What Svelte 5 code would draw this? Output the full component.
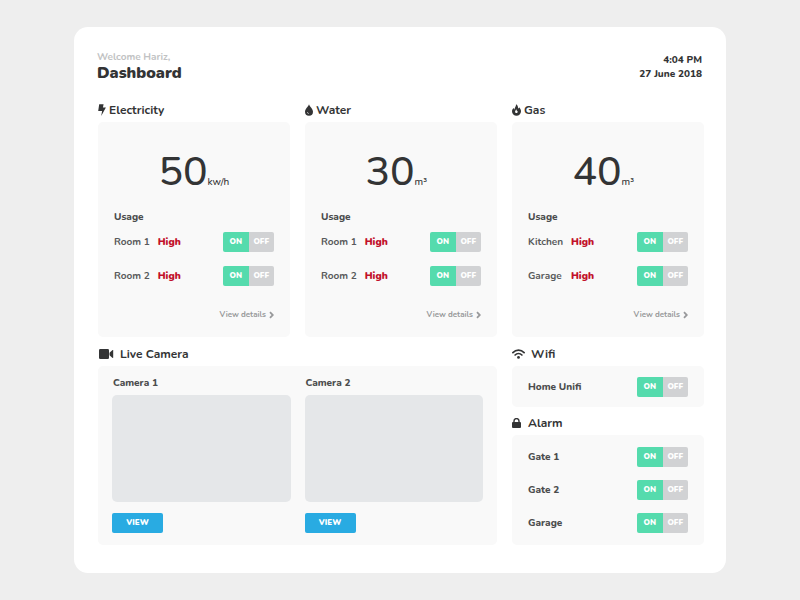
<script>
  const meters = $state([
    {
      name: 'Electricity', icon: 'bolt', value: 50, unit: 'kw/h',
      rooms: [{ name: 'Room 1', level: 'High', on: true }, { name: 'Room 2', level: 'High', on: true }]
    },
    {
      name: 'Water', icon: 'drop', value: 30, unit: 'm³',
      rooms: [{ name: 'Room 1', level: 'High', on: true }, { name: 'Room 2', level: 'High', on: true }]
    },
    {
      name: 'Gas', icon: 'flame', value: 40, unit: 'm³',
      rooms: [{ name: 'Kitchen', level: 'High', on: true }, { name: 'Garage', level: 'High', on: true }]
    }
  ]);
  const wifi = $state([{ name: 'Home Unifi', on: true }]);
  const alarms = $state([
    { name: 'Gate 1', on: true },
    { name: 'Gate 2', on: true },
    { name: 'Garage', on: true }
  ]);
  const cameras = ['Camera 1', 'Camera 2'];
</script>

{#snippet icon(name)}
  {#if name === 'bolt'}
    <svg width="8" height="12" viewBox="0 0 8 12" aria-hidden="true"><path d="M1.200 0.300h4.400L4.900 3.400h3L3.200 11.900l.9-4.900H0.200z" /></svg>
  {:else if name === 'drop'}
    <svg width="8" height="12" viewBox="0 0 8 12" aria-hidden="true"><path fill-rule="evenodd" d="M4 .2C4.700 2.700 8 4.800 8 7.700a4 4 0 0 1-8 0C0 4.800 3.300 2.700 4 .2zM2.200 8c0 1 .7 1.700 1.700 1.700v-.5c-.7 0-1.200-.5-1.200-1.200z" /></svg>
  {:else if name === 'flame'}
    <svg width="9" height="12" viewBox="0 0 9 12" aria-hidden="true"><path fill-rule="evenodd" d="M4 .2C6.400 1.500 5.700 3.500 6.600 4.500c.4-.3.500-.8.500-1.300C8.400 4.500 9 5.900 9 7.300a4.500 4.500 0 0 1-9 0C0 5.500.9 4.700 1.700 3.900c.1.800.3 1.300.8 1.600C2.400 3.300 4.300 2.600 4 .2zM4 5.300c.1 1.100-.9 1.500-.9 2.500 0 .8.600 1.300 1.300 1.300s1.300-.5 1.300-1.300c0-.5-.2-.8-.5-1.100 0 .3-.1.500-.3.600C4.900 6.500 4.600 5.700 4 5.300z" /></svg>
  {:else if name === 'camera'}
    <svg width="16" height="10" viewBox="-1 0 16 10" aria-hidden="true"><rect width="10" height="10" rx="1.300" /><path d="M10.500 3.700 13.300 1.200c.4-.3.900-.1.900.4v6.800c0 .5-.5.7-.9.4L10.500 6.300z" /></svg>
  {:else if name === 'wifi'}
    <svg width="13" height="10" viewBox="0 0 13 10" aria-hidden="true"><g fill="none" stroke="currentColor" stroke-width="1.700" stroke-linecap="round"><path d="M.9 3.600C4.100.4 8.900.4 12.100 3.600" /><path d="M3.100 6c1.900-1.800 4.900-1.800 6.800 0" /></g><circle cx="6.500" cy="8.400" r="1.400" /></svg>
  {:else}
    <svg width="10" height="10" viewBox="0 0 10 10" aria-hidden="true"><rect y="4" width="9" height="6" rx="1" /><path d="M2 4.500V2.900a2.500 2.300 0 0 1 5 0v1.600" fill="none" stroke="currentColor" stroke-width="1.400" /></svg>
  {/if}
{/snippet}

{#snippet toggle(item)}
  <div class="toggle" role="group" aria-label={item.name}>
    <button type="button" class:active={item.on} aria-pressed={item.on} onclick={() => (item.on = true)}>ON</button>
    <button type="button" class:active={!item.on} aria-pressed={!item.on} onclick={() => (item.on = false)}>OFF</button>
  </div>
{/snippet}

<div class="page">
  <main class="panel">
    <header>
      <div>
        <p class="welcome">Welcome Hariz,</p>
        <h1>Dashboard</h1>
      </div>
      <div class="clock">
        <time>4:04 PM</time>
        <time datetime="2018-06-27">27 June 2018</time>
      </div>
    </header>

    <div class="grid">
      {#each meters as meter}
        <section>
          <h2>{@render icon(meter.icon)}{meter.name}</h2>
          <div class="card meter">
            <p class="reading"><span class="value">{meter.value}</span><span class="unit">{meter.unit}</span></p>
            <h3>Usage</h3>
            <ul class="rooms">
              {#each meter.rooms as room}
                <li>
                  <span class="room">{room.name}</span>
                  <span class="level">{room.level}</span>
                  {@render toggle(room)}
                </li>
              {/each}
            </ul>
            <a class="details" href="#details">View details
              <svg width="5" height="8" viewBox="0 0 5 8" aria-hidden="true"><path d="M1 1.200 3.800 4 1 6.800" fill="none" stroke="currentColor" stroke-width="1.800" /></svg>
            </a>
          </div>
        </section>
      {/each}

      <section class="live">
        <h2 class="wide">{@render icon('camera')}Live Camera</h2>
        <div class="card cameras">
          {#each cameras as camera}
            <div class="camera">
              <h3>{camera}</h3>
              <div class="feed"></div>
              <button type="button" class="view" aria-label="View {camera}">VIEW</button>
            </div>
          {/each}
        </div>
      </section>

      <div class="side">
        <section>
          <h2 class="wide">{@render icon('wifi')}Wifi</h2>
          <ul class="card devices compact">
            {#each wifi as item}
              <li><span>{item.name}</span>{@render toggle(item)}</li>
            {/each}
          </ul>
        </section>
        <section>
          <h2 class="wide">{@render icon('lock')}Alarm</h2>
          <ul class="card devices">
            {#each alarms as item}
              <li><span>{item.name}</span>{@render toggle(item)}</li>
            {/each}
          </ul>
        </section>
      </div>
    </div>
  </main>
</div>

<style>
  :global(body) {
    margin: 0;
    background: #eeeeee;
  }

  .page {
    box-sizing: border-box;
    min-height: 100vh;
    display: flex;
    align-items: center;
    padding: 24px 74px;
    font-family: Nunito, Lato, 'Open Sans', sans-serif;
    font-size: 10px;
    line-height: 14px;
    color: #333435;
  }

  .panel {
    flex: 1;
    padding: 24px 22px 28px 23px;
    border-radius: 14px;
    background: #fff;
  }

  h1, h2, h3, p, ul {
    margin: 0;
    padding: 0;
  }

  ul {
    list-style: none;
  }

  svg {
    flex: none;
    fill: currentColor;
  }

  header {
    display: flex;
    justify-content: space-between;
    height: 47px;
  }

  .welcome {
    line-height: 12px;
    font-weight: 700;
    color: #c1c2c3;
  }

  h1 {
    font-size: 16px;
    line-height: 20px;
    font-weight: 900;
  }

  .clock {
    display: flex;
    flex-direction: column;
    padding: 2px 2px 0 0;
    text-align: right;
    font-weight: 800;
  }

  .grid {
    display: grid;
    grid-template-columns: repeat(3, 1fr);
    gap: 1px 15px;
    padding-left: 1px;
  }

  h2 {
    display: flex;
    align-items: center;
    gap: 3px;
    height: 24px;
    font-size: 12px;
    font-weight: 700;
  }

  h2.wide {
    box-sizing: border-box;
    gap: 6px;
    height: 28px;
    padding-top: 4px;
  }

  h3 {
    font-size: 10px;
    font-weight: 800;
    color: #4b4c4d;
  }

  .card {
    border-radius: 5px;
    background: #f9f9f9;
  }

  .meter {
    display: flex;
    flex-direction: column;
    padding: 26px 16px 15px;
  }

  .reading {
    display: flex;
    align-items: baseline;
    justify-content: center;
    line-height: 48px;
    margin-bottom: 4px;
  }

  .value {
    font-size: 41px;
    font-weight: 500;
  }

  .unit {
    min-width: 22px;
    font-weight: 500;
  }

  .rooms {
    display: grid;
    gap: 14px;
    margin: 8px 0 22px;
  }

  li {
    display: flex;
    align-items: center;
  }

  .room {
    min-width: 35px;
    margin-right: 8px;
    font-weight: 700;
    color: #58595b;
  }

  .level {
    font-weight: 900;
    color: #c2112b;
  }

  .toggle {
    display: flex;
    width: 51px;
    height: 20px;
    margin-left: auto;
    border-radius: 2px;
    overflow: hidden;
  }

  button {
    padding: 0;
    border: 0;
    font: inherit;
    color: #fff;
    cursor: pointer;
  }

  .toggle button {
    flex: 1;
    background: #d1d2d4;
    font-size: 8px;
    font-weight: 900;
  }

  .toggle button.active {
    background: #55dbad;
  }

  .details {
    display: flex;
    align-items: center;
    align-self: flex-end;
    gap: 3px;
    font-size: 8px;
    font-weight: 700;
    color: #98999b;
    text-decoration: none;
  }

  .live {
    grid-column: span 2;
    display: flex;
    flex-direction: column;
  }

  .cameras {
    flex: 1;
    display: grid;
    grid-template-columns: 1fr 1fr;
    gap: 14px;
    padding: 10px 14px 12px;
  }

  .camera {
    display: flex;
    flex-direction: column;
    align-items: flex-start;
  }

  .camera h3 {
    padding-left: 1px;
  }

  .feed {
    align-self: stretch;
    aspect-ratio: 5 / 3;
    margin: 5px 0 11px;
    border-radius: 5px;
    background: #e5e7e9;
  }

  .view {
    width: 51px;
    height: 20px;
    border-radius: 2px;
    background: #29abe2;
    font-size: 8px;
    font-weight: 900;
  }

  .devices {
    display: grid;
    gap: 13px;
    padding: 12px 16px;
    font-weight: 800;
    color: #4b4c4d;
  }

  .devices.compact {
    padding: 11px 16px 10px;
  }
</style>
